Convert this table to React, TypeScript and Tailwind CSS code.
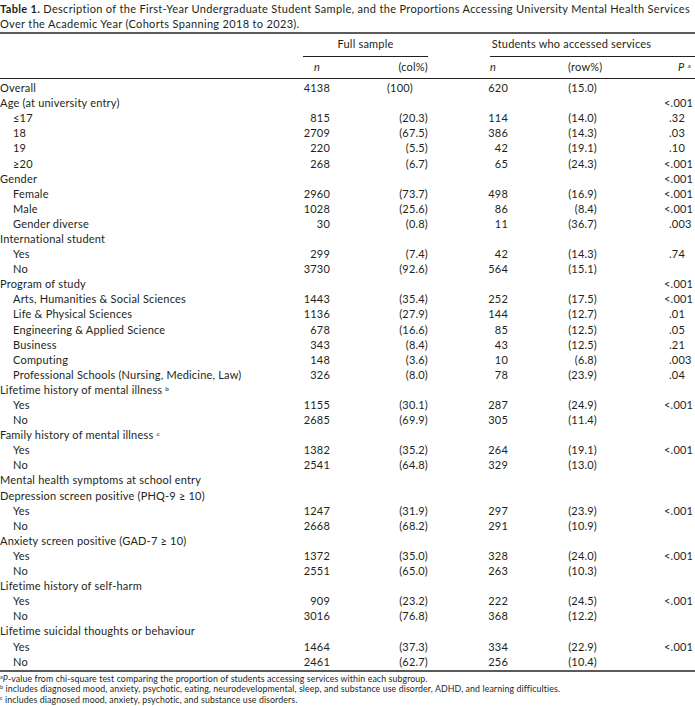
type Row = {
  label: React.ReactNode;
  sub?: boolean;
  n1?: string;
  c1?: string;
  n2?: string;
  r2?: string;
  p?: string;
};

const rows: Row[] = [
  { label: "Overall", n1: "4138", c1: "(100)", n2: "620", r2: "(15.0)" },
  { label: "Age (at university entry)", p: "<.001" },
  { label: "≤17", sub: true, n1: "815", c1: "(20.3)", n2: "114", r2: "(14.0)", p: ".32" },
  { label: "18", sub: true, n1: "2709", c1: "(67.5)", n2: "386", r2: "(14.3)", p: ".03" },
  { label: "19", sub: true, n1: "220", c1: "(5.5)", n2: "42", r2: "(19.1)", p: ".10" },
  { label: "≥20", sub: true, n1: "268", c1: "(6.7)", n2: "65", r2: "(24.3)", p: "<.001" },
  { label: "Gender", p: "<.001" },
  { label: "Female", sub: true, n1: "2960", c1: "(73.7)", n2: "498", r2: "(16.9)", p: "<.001" },
  { label: "Male", sub: true, n1: "1028", c1: "(25.6)", n2: "86", r2: "(8.4)", p: "<.001" },
  { label: "Gender diverse", sub: true, n1: "30", c1: "(0.8)", n2: "11", r2: "(36.7)", p: ".003" },
  { label: "International student" },
  { label: "Yes", sub: true, n1: "299", c1: "(7.4)", n2: "42", r2: "(14.3)", p: ".74" },
  { label: "No", sub: true, n1: "3730", c1: "(92.6)", n2: "564", r2: "(15.1)" },
  { label: "Program of study", p: "<.001" },
  { label: "Arts, Humanities & Social Sciences", sub: true, n1: "1443", c1: "(35.4)", n2: "252", r2: "(17.5)", p: "<.001" },
  { label: "Life & Physical Sciences", sub: true, n1: "1136", c1: "(27.9)", n2: "144", r2: "(12.7)", p: ".01" },
  { label: "Engineering & Applied Science", sub: true, n1: "678", c1: "(16.6)", n2: "85", r2: "(12.5)", p: ".05" },
  { label: "Business", sub: true, n1: "343", c1: "(8.4)", n2: "43", r2: "(12.5)", p: ".21" },
  { label: "Computing", sub: true, n1: "148", c1: "(3.6)", n2: "10", r2: "(6.8)", p: ".003" },
  { label: "Professional Schools (Nursing, Medicine, Law)", sub: true, n1: "326", c1: "(8.0)", n2: "78", r2: "(23.9)", p: ".04" },
  {
    label: (
      <>
        Lifetime history of mental illness <sup className="text-[6.5px]">b</sup>
      </>
    ),
  },
  { label: "Yes", sub: true, n1: "1155", c1: "(30.1)", n2: "287", r2: "(24.9)", p: "<.001" },
  { label: "No", sub: true, n1: "2685", c1: "(69.9)", n2: "305", r2: "(11.4)" },
  {
    label: (
      <>
        Family history of mental illness <sup className="text-[6.5px]">c</sup>
      </>
    ),
  },
  { label: "Yes", sub: true, n1: "1382", c1: "(35.2)", n2: "264", r2: "(19.1)", p: "<.001" },
  { label: "No", sub: true, n1: "2541", c1: "(64.8)", n2: "329", r2: "(13.0)" },
  { label: "Mental health symptoms at school entry" },
  { label: "Depression screen positive (PHQ-9 ≥ 10)" },
  { label: "Yes", sub: true, n1: "1247", c1: "(31.9)", n2: "297", r2: "(23.9)", p: "<.001" },
  { label: "No", sub: true, n1: "2668", c1: "(68.2)", n2: "291", r2: "(10.9)" },
  { label: "Anxiety screen positive (GAD-7 ≥ 10)" },
  { label: "Yes", sub: true, n1: "1372", c1: "(35.0)", n2: "328", r2: "(24.0)", p: "<.001" },
  { label: "No", sub: true, n1: "2551", c1: "(65.0)", n2: "263", r2: "(10.3)" },
  { label: "Lifetime history of self-harm" },
  { label: "Yes", sub: true, n1: "909", c1: "(23.2)", n2: "222", r2: "(24.5)", p: "<.001" },
  { label: "No", sub: true, n1: "3016", c1: "(76.8)", n2: "368", r2: "(12.2)" },
  { label: "Lifetime suicidal thoughts or behaviour" },
  { label: "Yes", sub: true, n1: "1464", c1: "(37.3)", n2: "334", r2: "(22.9)", p: "<.001" },
  { label: "No", sub: true, n1: "2461", c1: "(62.7)", n2: "256", r2: "(10.4)" },
];

const grid = "grid grid-cols-[290px_40px_98px_80px_89px_98px]";

function PValue({ v }: { v?: string }) {
  if (!v) return <div />;
  // the "<" hangs left so the decimal points line up
  return <div className={v.startsWith("<") ? "pl-[67px]" : "pl-[72px]"}>{v}</div>;
}

export default function App() {
  return (
    <div className="w-[695px] h-[706px] overflow-hidden bg-white text-[#231f20] font-['Lato',sans-serif] text-[11px] tracking-[0.2px]">
      {/* Caption */}
      <div className="leading-[15px] pt-[1px] pb-[1px] whitespace-nowrap tracking-[0.33px]">
        <span className="font-bold">Table 1.</span> Description of the First-Year Undergraduate Student Sample, and the
        Proportions Accessing University Mental Health Services
        <br />
        Over the Academic Year (Cohorts Spanning 2018 to 2023).
      </div>

      <div className="border-t-2 border-[#5a5a5a]" />

      {/* Column headers */}
      <div className={`${grid} h-[20px] items-center`}>
        <div />
        <div className="col-span-2 ml-[13px] text-center">Full sample</div>
        <div className="col-span-3 ml-[40px] text-center pr-[20px]">Students who accessed services</div>
      </div>
      <div className={`${grid} mt-[2px]`}>
        <div />
        <div className="col-span-2 ml-[13px] border-t border-[#231f20]" />
        <div className="col-span-3 ml-[62px] border-t border-[#231f20]" />
      </div>
      <div className={`${grid} h-[21px] items-center`}>
        <div />
        <div className="pl-[24px] italic">n</div>
        <div className="text-right">(col%)</div>
        <div className="pl-[62px] italic">n</div>
        <div className="pl-[60px]">(row%)</div>
        <div className="pl-[81px]">
          <span className="italic">P</span> <sup className="text-[6.5px]">a</sup>
        </div>
      </div>

      <div className="border-t border-[#231f20]" />

      {/* Body */}
      <div className="pt-[1px]">
        {rows.map((r, i) => (
          <div key={i} className={`${grid} h-[15.1px] items-center leading-none`}>
            <div className={r.sub ? "pl-[13px] whitespace-nowrap" : "whitespace-nowrap"}>{r.label}</div>
            <div className="text-right">{r.n1}</div>
            <div className={r.c1 === "(100)" ? "text-right pr-[15px]" : "text-right"}>{r.c1}</div>
            <div className="text-right">{r.n2}</div>
            <div className="text-right">{r.r2}</div>
            <PValue v={r.p} />
          </div>
        ))}
      </div>

      <div className="mt-[1px] border-t-2 border-[#5a5a5a]" />

      {/* Footnotes */}
      <div className="pt-[2px] text-[8.8px] tracking-[0.1px] leading-[10.5px] whitespace-nowrap">
        <div>
          <sup className="text-[5.5px]">a</sup>
          <span className="italic">P</span>-value from chi-square test comparing the proportion of students accessing
          services within each subgroup.
        </div>
        <div>
          <sup className="text-[5.5px]">b</sup> includes diagnosed mood, anxiety, psychotic, eating, neurodevelopmental,
          sleep, and substance use disorder, ADHD, and learning difficulties.
        </div>
        <div>
          <sup className="text-[5.5px]">c</sup> includes diagnosed mood, anxiety, psychotic, and substance use disorders.
        </div>
      </div>
    </div>
  );
}
